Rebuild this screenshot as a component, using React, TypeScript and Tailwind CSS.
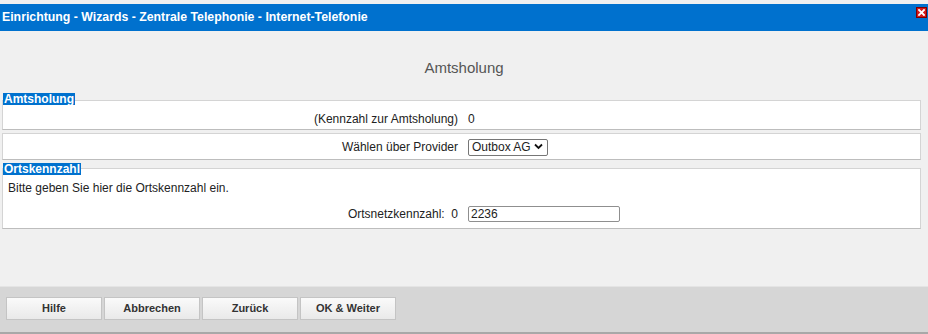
import React from 'react';

const font = { fontFamily: '"Liberation Sans", Arial, sans-serif' };

function Legend({ children }: { children: React.ReactNode }) {
  return (
    <div className="relative z-10 ml-[1px] w-fit bg-[#0071ce] px-[1px] text-[12px] font-bold leading-[12px] text-white">
      {children}
    </div>
  );
}

function Row({ label, children }: { label: string; children: React.ReactNode }) {
  return (
    <div className="grid h-full grid-cols-[465px_1fr] items-center">
      <div className="whitespace-pre pr-[10px] text-right">{label}</div>
      <div className="flex items-center">{children}</div>
    </div>
  );
}

const buttons = ['Hilfe', 'Abbrechen', 'Zurück', 'OK & Weiter'];

export default function App() {
  return (
    <div
      style={font}
      className="flex h-[334px] w-[928px] flex-col overflow-hidden bg-[#f0f0f0] pt-[4px] text-[12px] text-[#222]"
    >
      {/* title bar */}
      <div className="flex h-[27px] items-start justify-between bg-[#0071ce] pl-[2px] pr-[1px]">
        <div className="self-center text-[12.3px] font-bold text-white">
          Einrichtung - Wizards - Zentrale Telephonie - Internet-Telefonie
        </div>
        <div className="mt-[3px] flex h-[11px] w-[11px] items-center justify-center border border-[#7a0000] bg-[#d51818]">
          <svg width="7" height="7" viewBox="0 0 7 7">
            <path d="M1 1L6 6M6 1L1 6" stroke="white" strokeWidth="1.8" strokeLinecap="square" />
          </svg>
        </div>
      </div>

      <div className="mt-[28px] text-center text-[15px] leading-[18px] text-[#555]">Amtsholung</div>

      <div className="mt-[16px] flex flex-col pl-[2px] pr-[7px]">
        <Legend>Amtsholung</Legend>
        <div className="-mt-[5px] h-[30px] border border-[#d4d4d4] border-b-[#bdbdbd] bg-white pt-[9px] pb-[1px]">
          <div className="h-[18px]">
            <Row label="(Kennzahl zur Amtsholung)">0</Row>
          </div>
        </div>
        <div className="mt-[3px] h-[27px] border border-[#d4d4d4] border-b-[#bdbdbd] bg-white">
          <Row label="Wählen über Provider">
            <div className="relative">
              <select
                defaultValue="outbox"
                style={font}
                className="h-[17px] w-[80px] appearance-none rounded-[2px] border border-[#767676] bg-white pl-[3px] pr-[16px] text-[12px] leading-[15px] text-[#222] outline-none"
              >
                <option value="outbox">Outbox AG</option>
              </select>
              <svg
                className="pointer-events-none absolute right-[5px] top-[5px]"
                width="9"
                height="7"
                viewBox="0 0 9 7"
              >
                <path d="M1 1.5L4.5 5L8 1.5" fill="none" stroke="#111" strokeWidth="1.8" />
              </svg>
            </div>
          </Row>
        </div>

        <div className="mt-[3px]">
          <Legend>Ortskennzahl</Legend>
        </div>
        <div className="-mt-[7px] h-[61px] border border-[#d4d4d4] border-b-[#bdbdbd] bg-white pt-[11px]">
          <div className="h-[16px] pl-[5px] leading-[16px]">Bitte geben Sie hier die Ortskennzahl ein.</div>
          <div className="mt-[8px] h-[20px]">
            <Row label="Ortsnetzkennzahl:  0">
              <input
                defaultValue="2236"
                style={font}
                className="h-[16px] w-[152px] rounded-[2px] border border-[#8f8f8f] px-[2px] text-[12px] text-[#222] outline-none"
              />
            </Row>
          </div>
        </div>
      </div>

      <div className="flex-1" />

      {/* footer */}
      <div className="flex h-[48px] gap-[2px] border-t border-b-2 border-t-[#e4e4e4] border-b-[#a8a8a8] bg-[#d6d6d6] pl-[6px] pt-[10px]">
        {buttons.map((b) => (
          <button
            key={b}
            style={font}
            className="h-[23px] w-[96px] border border-[#c4c4c4] bg-gradient-to-b from-[#fafafa] to-[#e9e9e9] text-[11px] font-bold text-[#333]"
          >
            {b}
          </button>
        ))}
      </div>
    </div>
  );
}
